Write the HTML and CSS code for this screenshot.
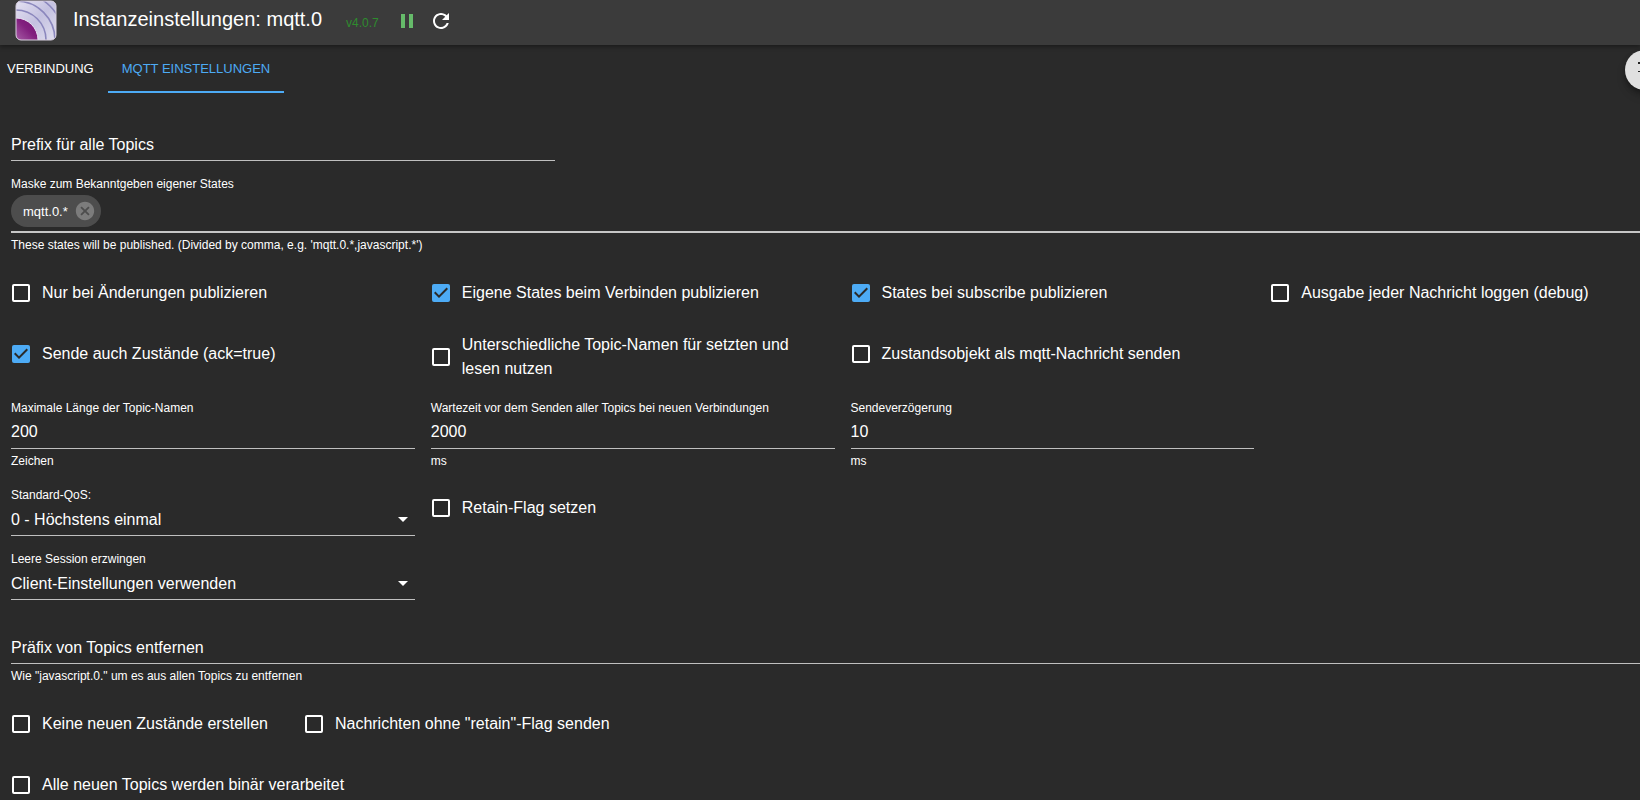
FILE: index.html
```html
<!DOCTYPE html>
<html lang="de">
<head>
<meta charset="utf-8">
<title>Instanzeinstellungen: mqtt.0</title>
<link rel="stylesheet" href="styles.css">
</head>
<body>
<header class="header">
  <svg class="logo" viewBox="0 0 42 42" aria-hidden="true">
    <defs>
      <linearGradient id="bg" x1="0" y1="0" x2="1" y2="1"><stop offset="0" stop-color="#e6e3f3"/><stop offset=".5" stop-color="#c4c1e0"/><stop offset="1" stop-color="#e2e0f0"/></linearGradient>
      <linearGradient id="core" x1="0" y1="1" x2="1" y2="0"><stop offset=".3" stop-color="#c48cc4"/><stop offset=".75" stop-color="#82207f"/><stop offset="1" stop-color="#741070"/></linearGradient>
      <clipPath id="tile"><rect x="1" y="1" width="40" height="39" rx="5"/></clipPath>
    </defs>
    <g clip-path="url(#tile)">
      <rect width="42" height="42" fill="url(#bg)"/>
      <g fill="none" stroke="#8b87bd" stroke-width="1.6">
        <circle cx="1" cy="40" r="30"/><circle cx="1" cy="40" r="39"/><circle cx="1" cy="40" r="48"/>
      </g>
      <circle cx="1" cy="40" r="22" fill="url(#core)" stroke="#e8e2f2" stroke-width="1"/>
    </g>
    <rect x="1" y="1" width="40" height="39" rx="5" fill="none" stroke="#d8cfdf" stroke-width="1"/>
  </svg>
  <h1 class="title">Instanzeinstellungen: mqtt.0</h1>
  <span class="version">v4.0.7</span>
  <button class="icon-button icon-button--run" type="button" aria-label="Pause"><svg viewBox="0 0 24 24"><path d="M6 19h4V5H6v14zm8-14v14h4V5h-4z"/></svg></button>
  <button class="icon-button" type="button" aria-label="Neu laden"><svg viewBox="0 0 24 24"><path d="M17.65 6.35C16.2 4.9 14.21 4 12 4c-4.42 0-7.99 3.58-7.99 8s3.57 8 7.99 8c3.73 0 6.84-2.55 7.73-6h-2.08c-.82 2.33-3.04 4-5.65 4-3.31 0-6-2.69-6-6s2.69-6 6-6c1.66 0 3.14.69 4.22 1.78L13 11h7V4l-2.35 2.35z"/></svg></button>
</header>
<nav class="tabs" role="tablist">
  <button class="tab" type="button" role="tab" aria-selected="false">VERBINDUNG</button>
  <button class="tab tab--active" type="button" role="tab" aria-selected="true">MQTT EINSTELLUNGEN</button>
</nav>
<button class="fab" type="button" aria-label="Hilfe"><svg viewBox="0 0 24 24"><path d="M5 4h14v2H5zM5 13h14v1H5z"/></svg></button>
<main class="form">
  <div class="field field--third">
    <input class="input input--empty" id="prefix" type="text" placeholder="Prefix für alle Topics" aria-label="Prefix für alle Topics">
  </div>
  <div class="field">
    <span class="label">Maske zum Bekanntgeben eigener States</span>
    <div class="chips">
      <span class="chip">mqtt.0.*<button class="chip-delete" type="button" aria-label="mqtt.0.* entfernen"><svg viewBox="0 0 24 24"><path d="M12 2C6.47 2 2 6.47 2 12s4.47 10 10 10 10-4.47 10-10S17.53 2 12 2zm5 13.59L15.59 17 12 13.41 8.41 17 7 15.59 10.59 12 7 8.41 8.41 7 12 10.59 15.59 7 17 8.41 13.41 12 17 15.59z"/></svg></button></span>
    </div>
    <span class="helper">These states will be published. (Divided by comma, e.g. 'mqtt.0.*,javascript.*')</span>
  </div>
  <div class="grid grid--checks">
    <label class="check"><input type="checkbox"><span>Nur bei Änderungen publizieren</span></label>
    <label class="check"><input type="checkbox" checked><span>Eigene States beim Verbinden publizieren</span></label>
    <label class="check"><input type="checkbox" checked><span>States bei subscribe publizieren</span></label>
    <label class="check"><input type="checkbox"><span>Ausgabe jeder Nachricht loggen (debug)</span></label>
    <label class="check"><input type="checkbox" checked><span>Sende auch Zustände (ack=true)</span></label>
    <label class="check"><input type="checkbox"><span>Unterschiedliche Topic-Namen für setzten und lesen nutzen</span></label>
    <label class="check"><input type="checkbox"><span>Zustandsobjekt als mqtt-Nachricht senden</span></label>
  </div>
  <div class="grid">
    <div class="field">
      <label class="label" for="maxlen">Maximale Länge der Topic-Namen</label>
      <input class="input" id="maxlen" type="text" value="200">
      <span class="helper">Zeichen</span>
    </div>
    <div class="field">
      <label class="label" for="wait">Wartezeit vor dem Senden aller Topics bei neuen Verbindungen</label>
      <input class="input" id="wait" type="text" value="2000">
      <span class="helper">ms</span>
    </div>
    <div class="field">
      <label class="label" for="delay">Sendeverzögerung</label>
      <input class="input" id="delay" type="text" value="10">
      <span class="helper">ms</span>
    </div>
  </div>
  <div class="grid">
    <div class="field">
      <label class="label" for="qos">Standard-QoS:</label>
      <select class="input select" id="qos"><option>0 - Höchstens einmal</option></select>
    </div>
    <label class="check"><input type="checkbox"><span>Retain-Flag setzen</span></label>
  </div>
  <div class="grid">
    <div class="field">
      <label class="label" for="session">Leere Session erzwingen</label>
      <select class="input select" id="session"><option>Client-Einstellungen verwenden</option></select>
    </div>
  </div>
  <div class="field field--unlabelled">
    <input class="input input--empty" id="remove" type="text" placeholder="Präfix von Topics entfernen" aria-label="Präfix von Topics entfernen">
    <span class="helper">Wie "javascript.0." um es aus allen Topics zu entfernen</span>
  </div>
  <div class="inline-checks">
    <label class="check"><input type="checkbox"><span>Keine neuen Zustände erstellen</span></label>
    <label class="check"><input type="checkbox"><span>Nachrichten ohne "retain"-Flag senden</span></label>
  </div>
  <label class="check"><input type="checkbox"><span>Alle neuen Topics werden binär verarbeitet</span></label>
</main>
</body>
</html>
```

FILE: styles.css
```css
* { box-sizing: border-box; }

html { background: #2a2a2a; overflow: hidden; }

body {
  margin: 0;
  color: #fff;
  font-family: "Liberation Sans", Arial, sans-serif;
  font-size: 16px;
}

button, input, select { font: inherit; color: inherit; }
button { padding: 0; border: 0; background: none; }
svg { display: block; fill: currentColor; }

.header {
  position: relative;
  display: flex;
  align-items: center;
  height: 45px;
  padding: 0 15px;
  background: #3b3b3b;
  box-shadow: 0 2px 4px rgba(0, 0, 0, .35);
}
.logo { width: 42px; height: 42px; margin-bottom: 3px; }
.title { margin: 0 24px 7px 16px; font-size: 20px; line-height: 24px; font-weight: 400; }
.version { margin-right: 16px; color: #2e8b2e; font-size: 12px; line-height: 16px; }
.icon-button { width: 24px; height: 24px; margin-right: 10px; margin-bottom: 4px; }
.icon-button--run { color: #66bb6a; }

.tabs { display: flex; height: 48px; margin-left: -7px; }
.tab {
  padding: 0 14px;
  border-bottom: 2px solid transparent;
  font-size: 13px;
}
.tab--active { color: #4dabf5; border-color: #4dabf5; }

/* The help button hangs over the right edge of the window. */
.fab {
  position: absolute;
  top: 50px;
  right: -25px;
  display: grid;
  place-items: center;
  width: 40px;
  height: 40px;
  border-radius: 50%;
  background: #e0e0e0;
  color: #222;
  box-shadow: 0 3px 5px rgba(0, 0, 0, .3), 0 6px 10px rgba(0, 0, 0, .15);
}
.fab svg { width: 24px; height: 24px; }

.form { margin: 35px -34px 0 11px; }

.field { display: flex; flex-direction: column; margin-bottom: 15px; }
.field--third { width: 544px; }
.field--unlabelled { padding-top: 16px; margin-bottom: 16px; }
.label { font-size: 12px; line-height: 16px; }
.helper { margin-top: 2px; padding-bottom: 1px; font-size: 12px; line-height: 20px; }

.input {
  width: 100%;
  height: 33px;
  padding: 0;
  border: 0;
  border-bottom: 1px solid #bfbfbf;
  border-radius: 0;
  background: transparent;
  outline: 0;
}
.input--empty { padding-top: 2px; }
.input::placeholder { color: #fff; opacity: 1; }
.select {
  appearance: none;
  background: url("data:image/svg+xml,%3Csvg xmlns='http://www.w3.org/2000/svg' viewBox='0 0 24 24'%3E%3Cpath fill='white' d='M7 10l5 5 5-5z'/%3E%3C/svg%3E") right center / 24px no-repeat;
}

.chips { padding: 3px 0 4px; border-bottom: 2px solid #c6c6c6; }
.chip {
  display: inline-flex;
  align-items: center;
  gap: 6px;
  height: 32px;
  padding: 0 5px 0 12px;
  border-radius: 16px;
  background: #4d4d4d;
  font-size: 13px;
  vertical-align: top;
}
.chip-delete { width: 22px; height: 22px; color: #7c7c7c; }

.grid {
  display: grid;
  grid-template-columns: repeat(4, 1fr);
  gap: 16px;
  row-gap: 19px;
  align-items: start;
}
.grid--checks { margin: 16px 0 19px; }

.check {
  display: flex;
  align-items: center;
  gap: 12px;
  min-height: 42px;
  padding-right: 16px;
  line-height: 24px;
}
.check input {
  appearance: none;
  flex: none;
  width: 18px;
  height: 18px;
  margin: 0 0 0 1px;
  border: 2px solid #fff;
  border-radius: 2px;
}
.check input:checked {
  border: 0;
  background: #4dabf5 url("data:image/svg+xml,%3Csvg xmlns='http://www.w3.org/2000/svg' viewBox='3 3 18 18'%3E%3Cpath fill='%232a2a2a' d='M10 17l-5-5 1.41-1.41L10 14.17l7.59-7.59L19 8l-9 9z'/%3E%3C/svg%3E") center / 18px no-repeat;
}

.inline-checks { display: flex; gap: 20px; margin-bottom: 19px; }
```
